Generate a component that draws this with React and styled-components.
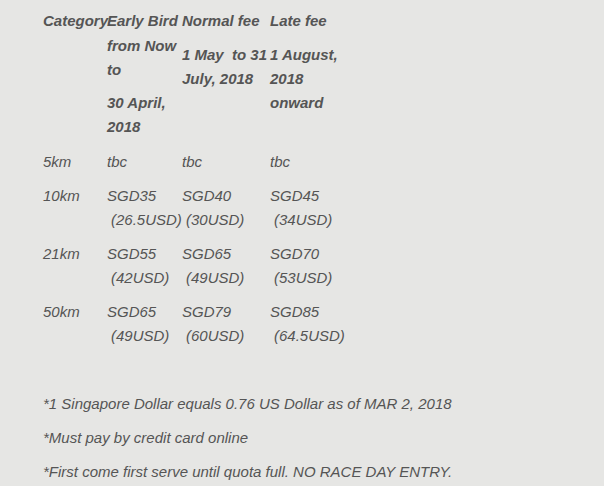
import React from "react";
import styled, { createGlobalStyle } from "styled-components";

const GlobalStyle = createGlobalStyle`
  html, body {
    margin: 0;
    padding: 0;
    background: #e6e6e4;
  }
  body {
    font-family: "Liberation Sans", Arial, sans-serif;
  }
`;

const fees = [
  { category: "5km", early: ["tbc"], normal: ["tbc"], late: ["tbc"] },
  { category: "10km", early: ["SGD35", "(26.5USD)"], normal: ["SGD40", "(30USD)"], late: ["SGD45", "(34USD)"] },
  { category: "21km", early: ["SGD55", "(42USD)"], normal: ["SGD65", "(49USD)"], late: ["SGD70", "(53USD)"] },
  { category: "50km", early: ["SGD65", "(49USD)"], normal: ["SGD79", "(60USD)"], late: ["SGD85", "(64.5USD)"] },
];

const notes = [
  "*1 Singapore Dollar equals 0.76 US Dollar as of MAR 2, 2018",
  "*Must pay by credit card online",
  "*First come first serve until quota full. NO RACE DAY ENTRY.",
];

const PriceCell = ({ lines }) => (
  <Cell>
    <Sgd>{lines[0]}</Sgd>
    {lines[1] && <Usd>{lines[1]}</Usd>}
  </Cell>
);

const App = () => {
  return (
    <>
      <GlobalStyle />
      <Page>
        <Table>
          <Row>
            <HeadCell>Category</HeadCell>
            <HeadCell>Early Bird</HeadCell>
            <HeadCell>Normal fee</HeadCell>
            <HeadCell>Late fee</HeadCell>
          </Row>
          <Row $top={1}>
            <HeadCell />
            <HeadCell>
              <Para>from Now to</Para>
              <Para $gap={9}>30 April, 2018</Para>
            </HeadCell>
            <HeadCell $pad={9}>1 May{"\u00a0"} to 31 July, 2018</HeadCell>
            <HeadCell $pad={9}>1 August, 2018 onward</HeadCell>
          </Row>
          {fees.map((f, i) => (
            <Row key={f.category} $top={i === 0 ? 11 : 10}>
              <Cell>{f.category}</Cell>
              <PriceCell lines={f.early} />
              <PriceCell lines={f.normal} />
              <PriceCell lines={f.late} />
            </Row>
          ))}
        </Table>
        <Notes>
          {notes.map((n) => (
            <Note key={n}>{n}</Note>
          ))}
        </Notes>
      </Page>
    </>
  );
};

export default App;

const Page = styled.div`
  padding: 9px 0 0 43px;
  color: #555555;
  font-size: 15px;
  line-height: 24px;
  font-style: italic;
`;

const Table = styled.div`
  display: flex;
  flex-direction: column;
`;

const Row = styled.div`
  display: grid;
  grid-template-columns: 64px 75px 88px 82px;
  margin-top: ${(p) => p.$top || 0}px;
`;

const HeadCell = styled.div`
  font-weight: bold;
  white-space: ${(p) => (p.$nowrap ? "nowrap" : "normal")};
  padding-top: ${(p) => p.$pad || 0}px;
`;

const Para = styled.div`
  margin-top: ${(p) => p.$gap || 0}px;
`;

const Cell = styled.div`
  display: flex;
  flex-direction: column;
`;

const Sgd = styled.span`
  white-space: nowrap;
`;

const Usd = styled.span`
  white-space: nowrap;
  padding-left: 4px;
`;

const Notes = styled.div`
  display: flex;
  flex-direction: column;
  gap: 10px;
  margin-top: 44px;
`;

const Note = styled.p`
  margin: 0;
`;
